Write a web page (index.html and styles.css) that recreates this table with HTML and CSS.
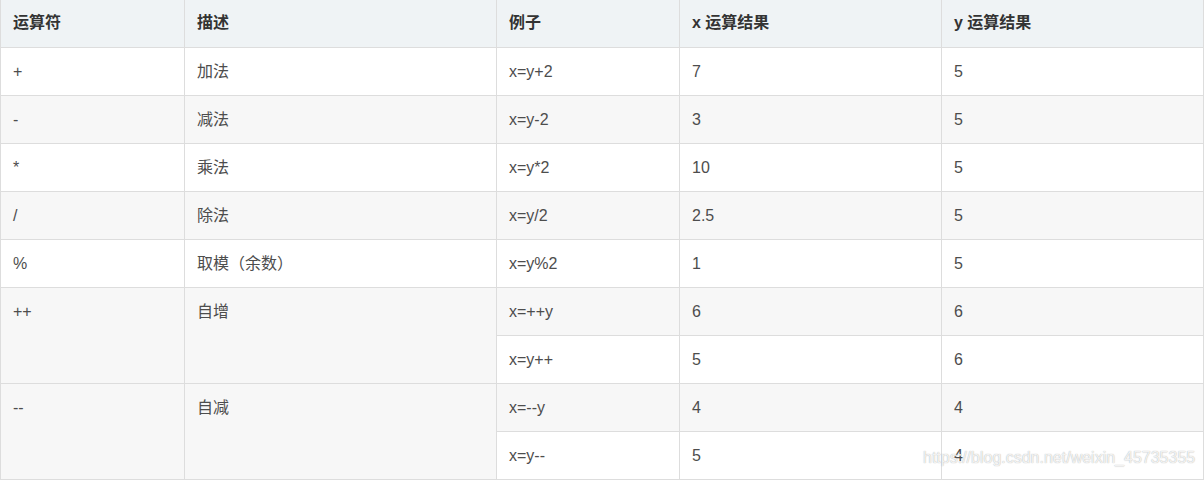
FILE: index.html
```html
<!DOCTYPE html>
<html lang="zh">
<head>
<meta charset="utf-8">
<link rel="stylesheet" href="styles.css">
</head>
<body>
<div class="wrap">
<table class="ops">
  <colgroup>
    <col class="c1"><col class="c2"><col class="c3"><col class="c4"><col class="c5">
  </colgroup>
  <thead>
    <tr><th>运算符</th><th>描述</th><th>例子</th><th>x 运算结果</th><th>y 运算结果</th></tr>
  </thead>
  <tbody>
    <tr><td>+</td><td>加法</td><td>x=y+2</td><td>7</td><td>5</td></tr>
    <tr class="alt"><td>-</td><td>减法</td><td>x=y-2</td><td>3</td><td>5</td></tr>
    <tr><td>*</td><td>乘法</td><td>x=y*2</td><td>10</td><td>5</td></tr>
    <tr class="alt"><td>/</td><td>除法</td><td>x=y/2</td><td>2.5</td><td>5</td></tr>
    <tr><td>%</td><td>取模（余数）</td><td>x=y%2</td><td>1</td><td>5</td></tr>
    <tr class="alt"><td rowspan="2">++</td><td rowspan="2">自增</td><td>x=++y</td><td>6</td><td>6</td></tr>
    <tr><td>x=y++</td><td>5</td><td>6</td></tr>
    <tr class="alt"><td rowspan="2">--</td><td rowspan="2">自减</td><td>x=--y</td><td>4</td><td>4</td></tr>
    <tr><td>x=y--</td><td>5</td><td>4</td></tr>
  </tbody>
</table>
<div class="watermark">https://blog.csdn.net/weixin_45735355</div>
</div>
</body>
</html>
```

FILE: styles.css
```css
html, body {
  margin: 0;
  padding: 0;
  background: #fff;
}
.wrap {
  position: relative;
  width: 1204px;
}
.ops {
  border-collapse: collapse;
  width: 1203px;
  table-layout: fixed;
  font-family: "Liberation Sans", "Noto Sans CJK SC", Arial, sans-serif;
  font-size: 16px;
  color: #4d4d4d;
}
.c1 { width: 184px; }
.c2 { width: 312px; }
.c3 { width: 183px; }
.c4 { width: 262px; }
.c5 { width: 262px; }
.ops th, .ops td {
  border: 1px solid #dddddd;
  padding: 14px 12px;
  line-height: 19px;
  text-align: left;
  vertical-align: top;
}
.ops thead th {
  border-top: none;
  background: #eff3f5;
  color: #333;
  font-weight: bold;
  padding: 13px 12px 15px;
}
.ops tbody tr { background: #fff; }
.ops tbody tr.alt { background: #f7f7f7; }
.watermark {
  position: absolute;
  left: 923px;
  top: 449px;
  font-family: "Liberation Sans", Arial, sans-serif;
  font-size: 16px;
  color: rgba(255,255,255,0.85);
  text-shadow: 0 0 1px rgba(150,150,150,0.9);
  pointer-events: none;
  white-space: nowrap;
}
```
